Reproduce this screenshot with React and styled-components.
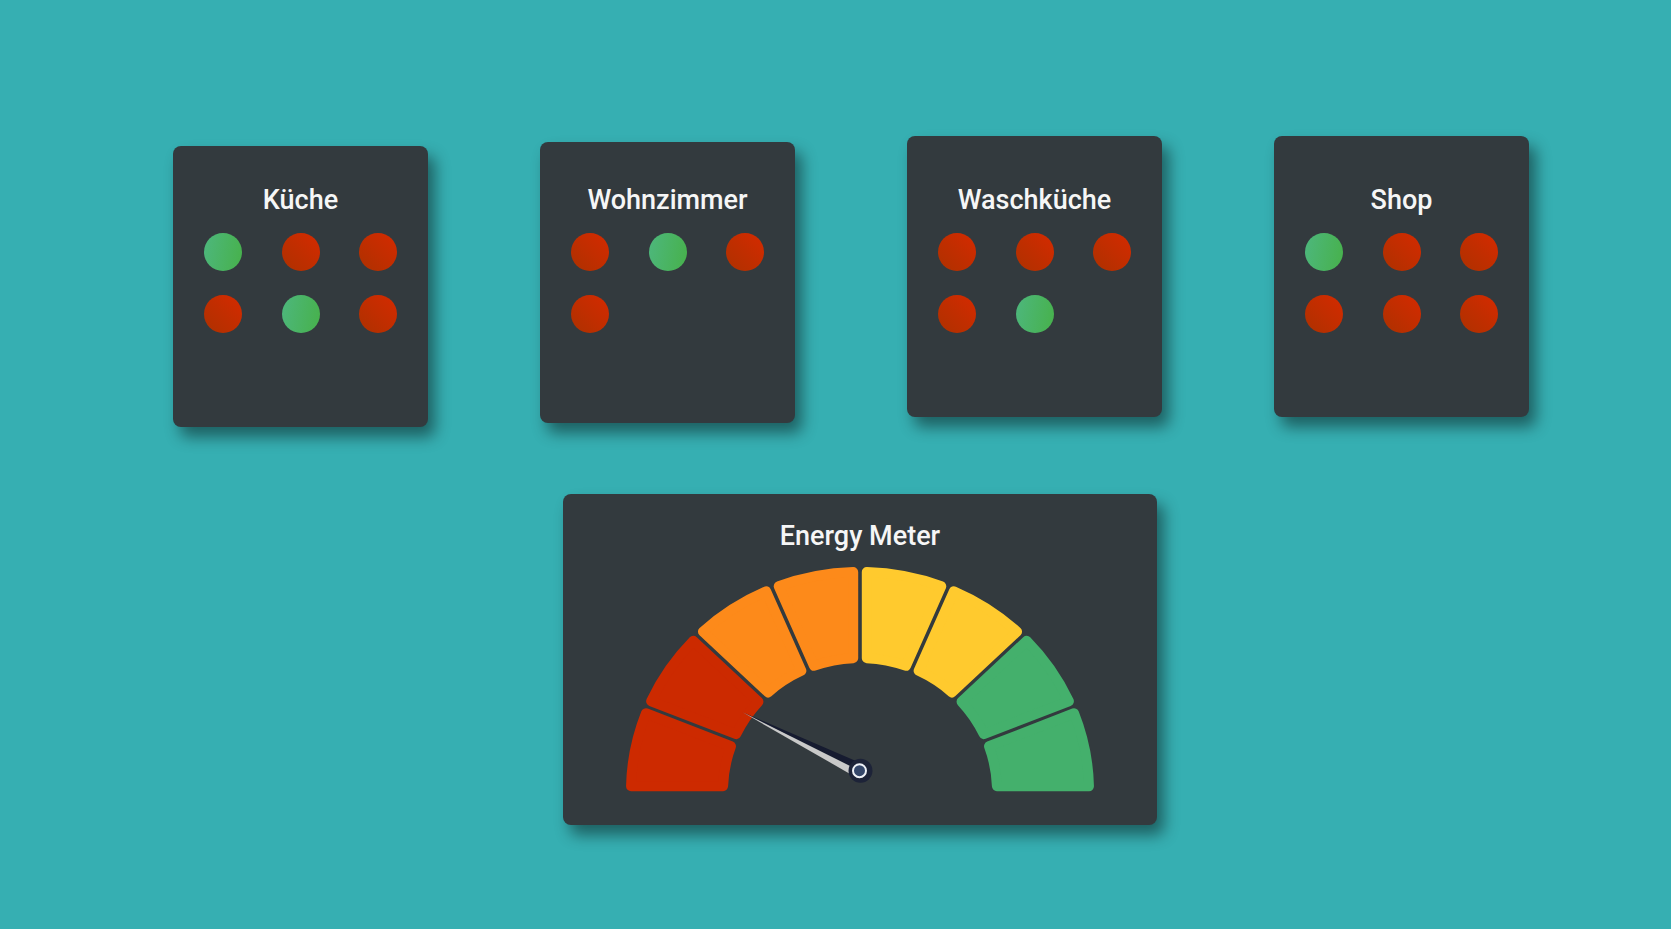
import React from "react";
import styled, { createGlobalStyle } from "styled-components";

const GlobalStyle = createGlobalStyle`
  html, body {
    margin: 0;
    padding: 0;
  }
  body {
    background: #36afb2;
    font-family: Roboto, "Liberation Sans", sans-serif;
  }
`;

const Page = styled.div`
  width: 1671px;
  height: 929px;
  box-sizing: border-box;
  padding: 146px 0 0 173px;
  display: flex;
  flex-direction: column;
  align-items: flex-start;
  background: #36afb2;
  overflow: hidden;
`;

const RoomRow = styled.div`
  display: flex;
  align-items: flex-start;
  gap: 112px;
`;

const RoomCard = styled.section`
  box-sizing: border-box;
  width: 255px;
  height: 281px;
  margin-top: ${({ $rise }) => -$rise}px;
  padding-top: ${({ $rise }) => 38 + $rise}px;
  background: #333a3e;
  border-radius: 8px;
  box-shadow: 7px 10px 15px rgba(0, 0, 0, 0.45);
`;

const Title = styled.h2`
  margin: 0;
  font-size: 27px;
  line-height: 32px;
  font-weight: 500;
  color: #f6f6f6;
  text-align: center;
`;

const DotGrid = styled.div`
  display: grid;
  grid-template-columns: repeat(3, 38px);
  column-gap: 39.5px;
  row-gap: 24px;
  justify-content: center;
  margin-top: 17px;
`;

const Dot = styled.span`
  width: 38px;
  height: 38px;
  border-radius: 50%;
  background: ${({ $on }) =>
    $on
      ? "linear-gradient(100deg, #4db77d, #47b14b)"
      : "linear-gradient(45deg, #ad3100, #d52a00)"};
`;

const MeterCard = styled.section`
  box-sizing: border-box;
  width: 594px;
  height: 331px;
  margin: 67px 0 0 390px;
  padding-top: 26px;
  display: flex;
  flex-direction: column;
  align-items: center;
  background: #333a3e;
  border-radius: 8px;
  box-shadow: 7px 10px 15px rgba(0, 0, 0, 0.45);
`;

const Gauge = styled.svg`
  display: block;
  margin-top: 8px;
`;

const rooms = [
  { name: "Küche", rise: 0, lights: [1, 0, 0, 0, 1, 0] },
  { name: "Wohnzimmer", rise: 4, lights: [0, 1, 0, 0] },
  { name: "Waschküche", rise: 10, lights: [0, 0, 0, 0, 1] },
  { name: "Shop", rise: 10, lights: [1, 0, 0, 0, 0, 0] },
];

const segColors = [
  "#cd2a00",
  "#cc2a00",
  "#fd8a1a",
  "#fd8a1a",
  "#ffca2e",
  "#ffca2e",
  "#44b06c",
  "#44b06c",
];

// gauge geometry (svg coords)
const CX = 240;
const CY = 231;
const OUT = { rx: 234, ry: 224 };
const INN = { rx: 132, ry: 128 };
const CORNER = 5;
const HALF_GAP = 1.8;

const pt = (a, rx, ry) =>
  `${(CX + rx * Math.cos(a)).toFixed(2)} ${(CY - ry * Math.sin(a)).toFixed(2)}`;

function segmentPath(i, count) {
  const step = Math.PI / count;
  const start = Math.PI - i * step;
  const end = Math.PI - (i + 1) * step;
  const orx = OUT.rx - CORNER;
  const ory = OUT.ry - CORNER;
  const irx = INN.rx + CORNER;
  const iry = INN.ry + CORNER;
  const gs = i === 0 ? 0 : HALF_GAP;
  const ge = i === count - 1 ? 0 : HALF_GAP;
  const s0 = start - (gs + CORNER) / orx;
  const e0 = end + (ge + CORNER) / orx;
  const s1 = start - (gs + CORNER) / irx;
  const e1 = end + (ge + CORNER) / irx;
  return `M ${pt(s0, orx, ory)} A ${orx} ${ory} 0 0 1 ${pt(e0, orx, ory)} L ${pt(
    e1,
    irx,
    iry
  )} A ${irx} ${iry} 0 0 0 ${pt(s1, irx, iry)} Z`;
}

function Needle() {
  const px = 239.5;
  const py = 210.7;
  const tx = 122.7;
  const ty = 152.3;
  const dx = tx - px;
  const dy = ty - py;
  const len = Math.hypot(dx, dy);
  const ux = dx / len;
  const uy = dy / len;
  const w = 7.5;
  const up = [px - uy * w, py + ux * w];
  const down = [px + uy * w, py - ux * w];
  return (
    <g>
      <polygon points={`${tx},${ty} ${up[0]},${up[1]} ${px},${py}`} fill="#161b30" />
      <polygon points={`${tx},${ty} ${px},${py} ${down[0]},${down[1]}`} fill="#c9c9c9" />
      <circle cx={px + 1} cy={py} r="12" fill="#1d2338" />
      <circle cx={px} cy={py} r="6.5" fill="#34466a" stroke="#eef1f7" strokeWidth="2" />
    </g>
  );
}

export default function App() {
  return (
    <>
      <GlobalStyle />
      <Page>
        <RoomRow>
          {rooms.map((room) => (
            <RoomCard key={room.name} $rise={room.rise}>
              <Title>{room.name}</Title>
              <DotGrid>
                {room.lights.map((on, i) => (
                  <Dot key={i} $on={on} />
                ))}
              </DotGrid>
            </RoomCard>
          ))}
        </RoomRow>
        <MeterCard>
          <Title>Energy Meter</Title>
          <Gauge width="480" height="236" viewBox="0 0 480 236">
            {segColors.map((c, i) => (
              <path
                key={i}
                d={segmentPath(i, segColors.length)}
                fill={c}
                stroke={c}
                strokeWidth={CORNER * 2}
                strokeLinejoin="round"
              />
            ))}
            <Needle />
          </Gauge>
        </MeterCard>
      </Page>
    </>
  );
}
